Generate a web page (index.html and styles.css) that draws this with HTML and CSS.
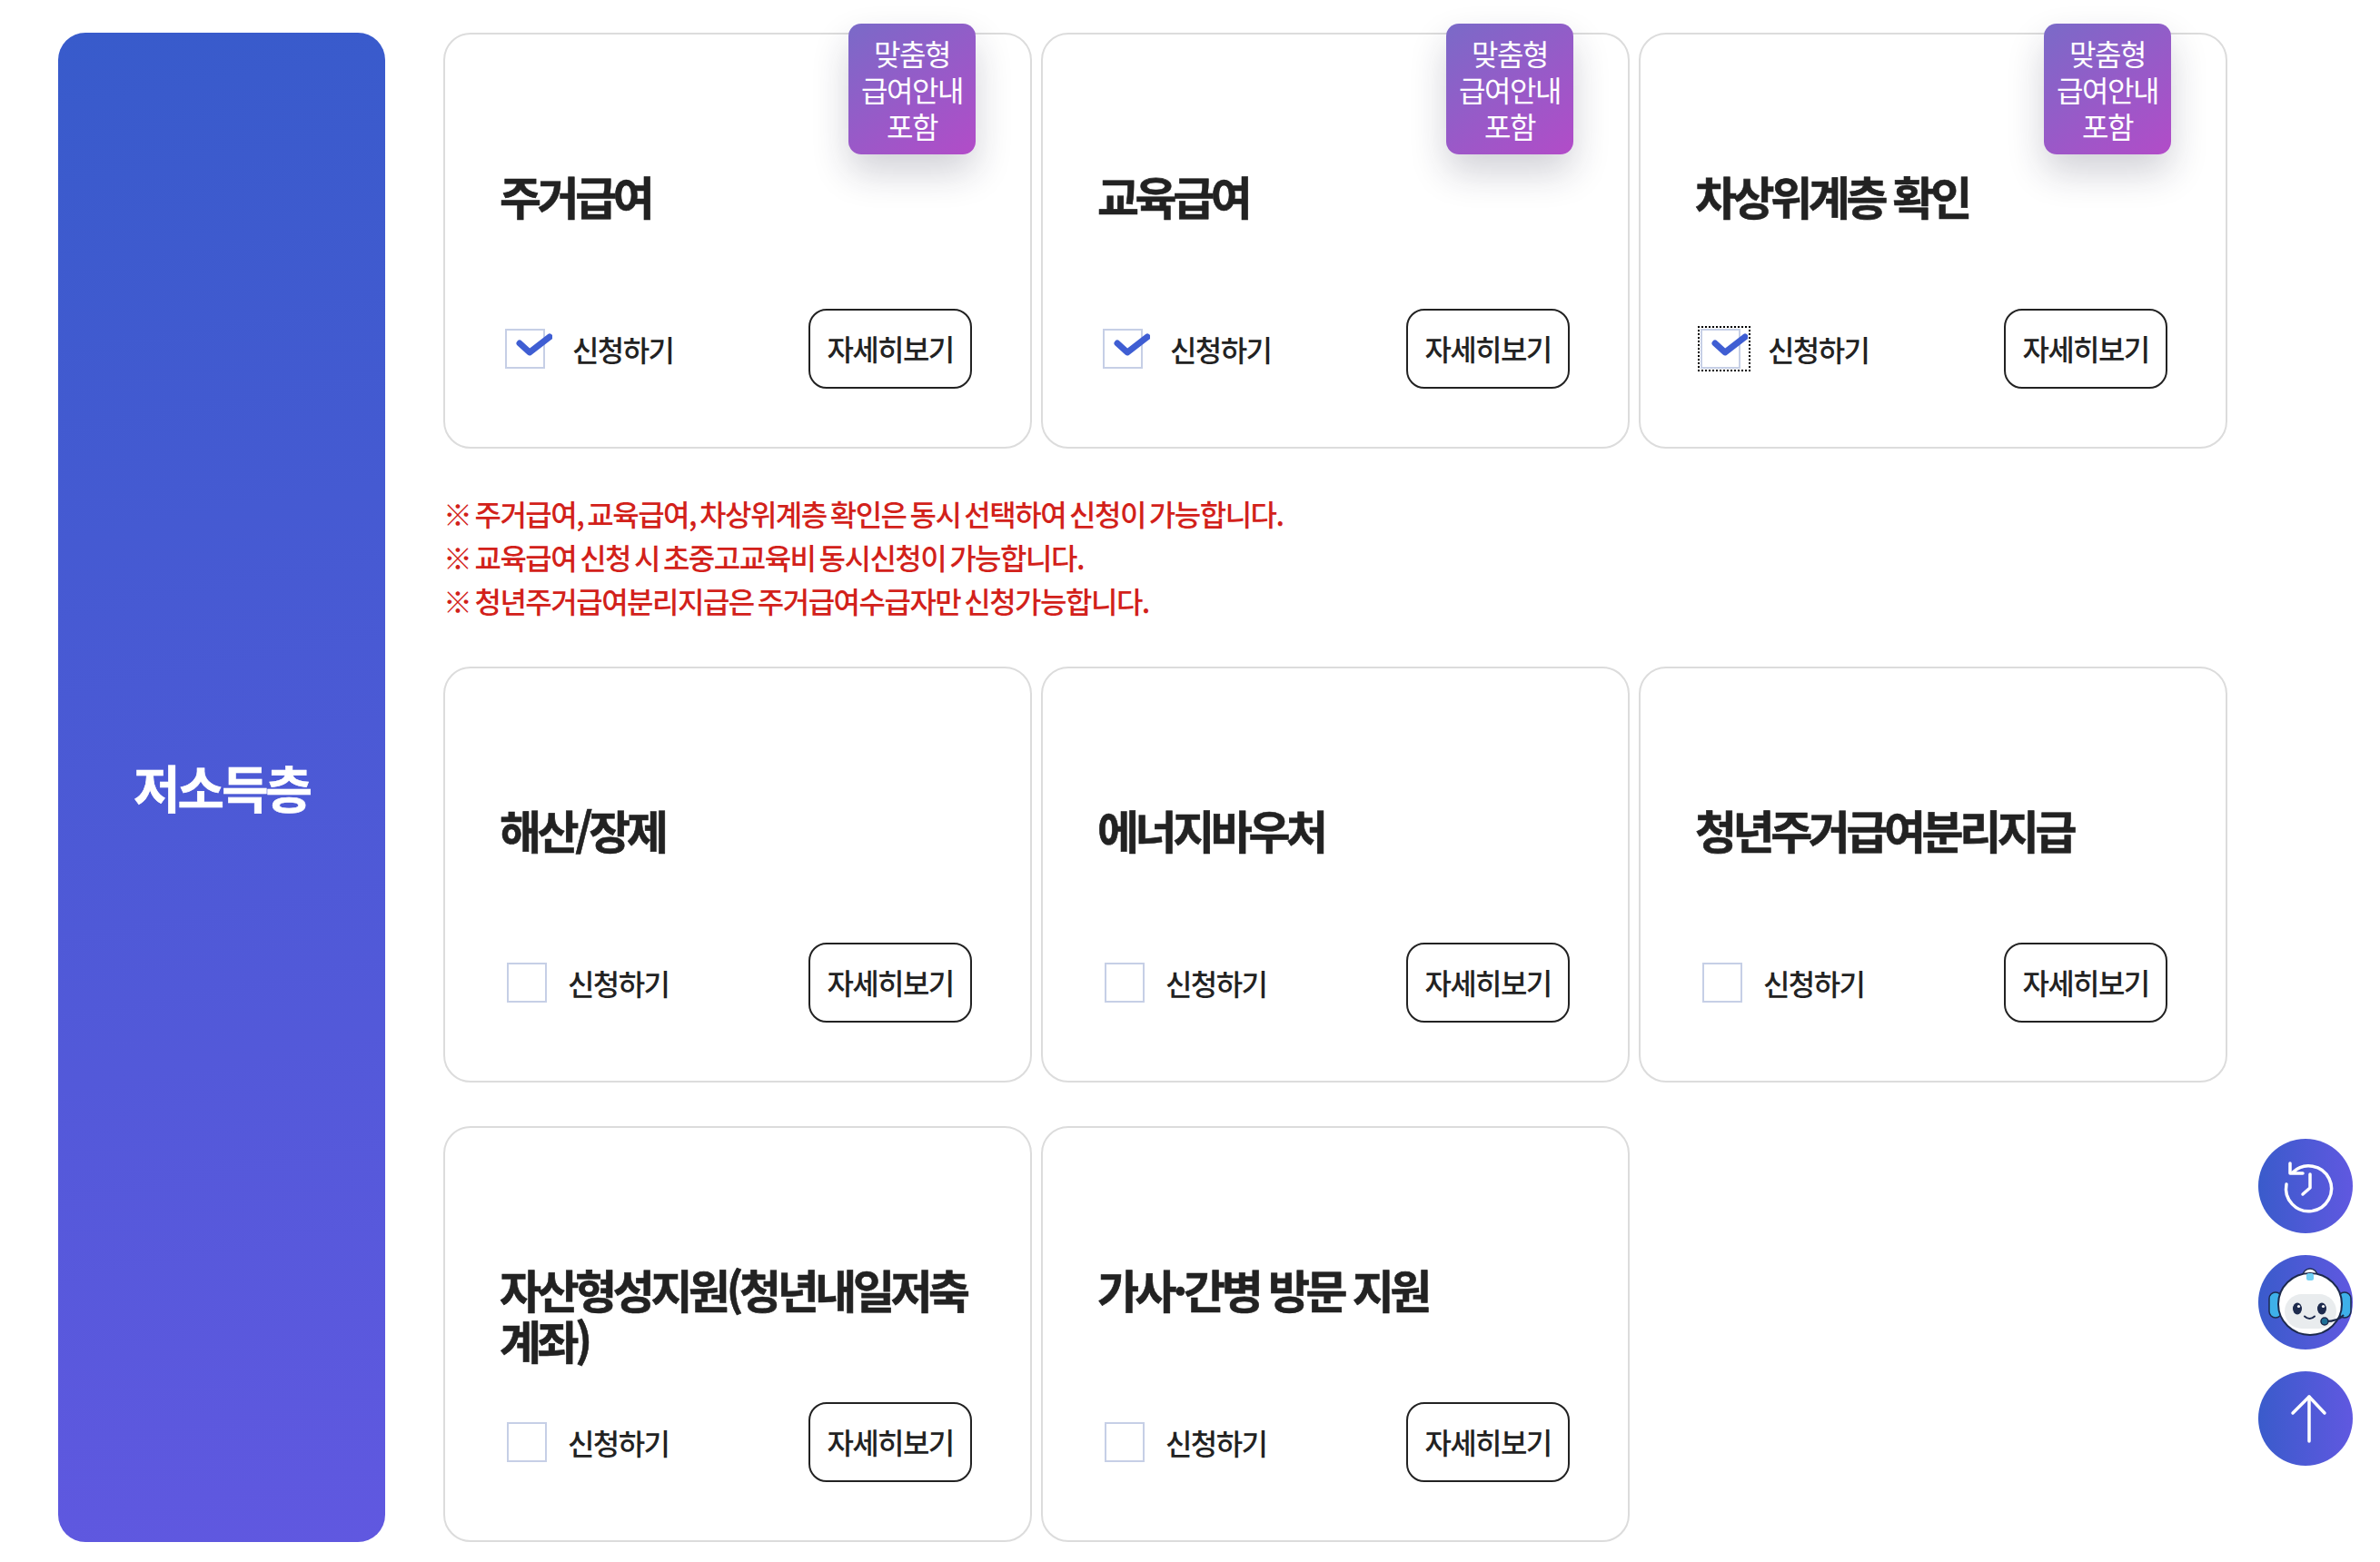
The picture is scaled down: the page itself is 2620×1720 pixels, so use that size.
FILE: index.html
```html
<!DOCTYPE html>
<html lang="ko">
<head>
    <meta charset="UTF-8">
    <meta name="viewport" content="width=device-width, initial-scale=1.0">
    <link rel="stylesheet" href="styles.css">
    <title>저소득층</title>
</head>
<body>
    <div class="wrap">
        <div class="side">저소득층</div>
        <div class="content">
            <div class="cards">
                <div class="card">
                    <span class="badge">맞춤형 급여안내 포함</span>
                    <strong class="cardTitle">주거급여</strong>
                    <div class="cardBottom">
                        <label class="apply">
                            <svg class="checked" viewBox="0 0 52 44"><rect x="1" y="1" width="42" height="42" fill="#fff" stroke="#c6cfe6" stroke-width="2"/><path d="M16 16l11 10L49 9" fill="none" stroke="#3f5ed3" stroke-width="7" stroke-linecap="round" stroke-linejoin="round"/></svg>
                            신청하기
                        </label>
                        <button class="moreBtn">자세히보기</button>
                    </div>
                </div>
                <div class="card">
                    <span class="badge">맞춤형 급여안내 포함</span>
                    <strong class="cardTitle">교육급여</strong>
                    <div class="cardBottom">
                        <label class="apply">
                            <svg class="checked" viewBox="0 0 52 44"><rect x="1" y="1" width="42" height="42" fill="#fff" stroke="#c6cfe6" stroke-width="2"/><path d="M16 16l11 10L49 9" fill="none" stroke="#3f5ed3" stroke-width="7" stroke-linecap="round" stroke-linejoin="round"/></svg>
                            신청하기
                        </label>
                        <button class="moreBtn">자세히보기</button>
                    </div>
                </div>
                <div class="card">
                    <span class="badge">맞춤형 급여안내 포함</span>
                    <strong class="cardTitle">차상위계층 확인</strong>
                    <div class="cardBottom">
                        <label class="apply">
                            <svg class="checked focused" viewBox="0 0 52 44"><rect x="1" y="1" width="42" height="42" fill="#fff" stroke="#c6cfe6" stroke-width="2"/><path d="M16 16l11 10L49 9" fill="none" stroke="#3f5ed3" stroke-width="7" stroke-linecap="round" stroke-linejoin="round"/></svg>
                            신청하기
                        </label>
                        <button class="moreBtn">자세히보기</button>
                    </div>
                </div>
            </div>

            <div class="notes">
                <p>※ 주거급여, 교육급여, 차상위계층 확인은 동시 선택하여 신청이 가능합니다.</p>
                <p>※ 교육급여 신청 시 초중고교육비 동시신청이 가능합니다.</p>
                <p>※ 청년주거급여분리지급은 주거급여수급자만 신청가능합니다.</p>
            </div>

            <div class="cards">
                <div class="card">
                    <strong class="cardTitle">해산/장제</strong>
                    <div class="cardBottom">
                        <label class="apply"><span class="box"></span>신청하기</label>
                        <button class="moreBtn">자세히보기</button>
                    </div>
                </div>
                <div class="card">
                    <strong class="cardTitle">에너지바우처</strong>
                    <div class="cardBottom">
                        <label class="apply"><span class="box"></span>신청하기</label>
                        <button class="moreBtn">자세히보기</button>
                    </div>
                </div>
                <div class="card">
                    <strong class="cardTitle">청년주거급여분리지급</strong>
                    <div class="cardBottom">
                        <label class="apply"><span class="box"></span>신청하기</label>
                        <button class="moreBtn">자세히보기</button>
                    </div>
                </div>
                <div class="card">
                    <strong class="cardTitle">자산형성지원(청년내일저축계좌)</strong>
                    <div class="cardBottom">
                        <label class="apply"><span class="box"></span>신청하기</label>
                        <button class="moreBtn">자세히보기</button>
                    </div>
                </div>
                <div class="card">
                    <strong class="cardTitle">가사·간병 방문 지원</strong>
                    <div class="cardBottom">
                        <label class="apply"><span class="box"></span>신청하기</label>
                        <button class="moreBtn">자세히보기</button>
                    </div>
                </div>
            </div>
        </div>
    </div>

    <div class="floatBtns">
        <button class="floatBtn" aria-label="최근 기록">
            <svg viewBox="0 0 104 104" fill="none" stroke="#fff" stroke-width="3.5" stroke-linecap="round" stroke-linejoin="round">
                <path d="M38 37A25 25 0 1 1 31 50"/>
                <path d="M35 27V38H49"/>
                <path d="M57 39V54L49 61"/>
            </svg>
        </button>
        <button class="floatBtn" aria-label="상담">
            <svg viewBox="0 0 104 104">
                <rect x="12" y="41" width="14" height="28" rx="7" fill="#3eb0ea" stroke="#1d2a4d" stroke-width="1.5"/>
                <rect x="88" y="41" width="14" height="28" rx="7" fill="#3eb0ea" stroke="#1d2a4d" stroke-width="1.5"/>
                <circle cx="57" cy="23" r="8" fill="#fff" stroke="#1d2a4d" stroke-width="1.5"/>
                <ellipse cx="57" cy="54" rx="35" ry="34" fill="#fff" stroke="#1d2a4d" stroke-width="2"/>
                <rect x="53" y="20" width="8" height="8" rx="2.5" fill="#6fd0f5"/>
                <rect x="29" y="43" width="57" height="38" rx="19" fill="#e9ecee"/>
                <ellipse cx="43" cy="59" rx="5" ry="6.5" fill="#1d2a4d"/>
                <ellipse cx="70" cy="59" rx="5" ry="6.5" fill="#1d2a4d"/>
                <circle cx="44.5" cy="56.500" r="1.6" fill="#fff"/>
                <circle cx="71.5" cy="56.500" r="1.6" fill="#fff"/>
                <path d="M51 67.5q5.500 5 11 0" fill="none" stroke="#1d2a4d" stroke-width="2" stroke-linecap="round"/>
                <path d="M74 73q14 0 20-7" fill="none" stroke="#1d2a4d" stroke-width="2"/>
                <circle cx="73" cy="73" r="4" fill="#1d6f96" stroke="#1d2a4d" stroke-width="1.5"/>
            </svg>
        </button>
        <button class="floatBtn" aria-label="맨 위로">
            <svg viewBox="0 0 104 104" fill="none" stroke="#fff" stroke-width="3.5" stroke-linecap="round" stroke-linejoin="round">
                <path d="M56 77V28"/>
                <path d="M38 46L56 28L73 46"/>
            </svg>
        </button>
    </div>
</body>
</html>
```

FILE: styles.css
```css
html, body{
    margin: 0;
    padding: 0;
    background-color: #fff;
}

body{
    font-family: "Noto Sans CJK KR", "Noto Sans", sans-serif;
    color: #222;
}

.wrap{
    display: flex;
    gap: 64px;
    padding: 36px 0 22px 64px;
}

.side{
    width: 360px;
    flex-shrink: 0;
    box-sizing: border-box;
    padding-bottom: 3px;
    display: flex;
    align-items: center;
    justify-content: center;
    border-radius: 30px;
    background: linear-gradient(170deg, #385bcb 0%, #6058e0 100%);
    color: #fff;
    font-size: 56px;
    font-weight: 700;
    letter-spacing: -3px;
    -webkit-text-stroke: 0.6px #fff;
}

.content{
    width: 1964px;
}

.cards{
    display: grid;
    grid-template-columns: repeat(3, 648px);
    column-gap: 10px;
    row-gap: 48px;
}

.card{
    position: relative;
    box-sizing: border-box;
    height: 458px;
    padding: 149px 64px 64px 60px;
    display: flex;
    flex-direction: column;
    justify-content: space-between;
    border: 2px solid #dcdcdc;
    border-radius: 30px;
    background-color: #fff;
}

.cardTitle{
    font-size: 50px;
    line-height: 56px;
    font-weight: 700;
    letter-spacing: -4.4px;
    -webkit-text-stroke: 0.6px #222;
    color: #222;
}

.badge{
    position: absolute;
    top: -12px;
    right: 60px;
    box-sizing: border-box;
    width: 140px;
    height: 144px;
    padding: 12px 8px 0;
    border-radius: 14px;
    background: linear-gradient(145deg, #7a6ac8 0%, #b24cc8 100%);
    box-shadow: 0 20px 40px rgba(30, 30, 60, 0.2);
    color: #fff;
    font-size: 32px;
    line-height: 40px;
    letter-spacing: -1.5px;
    text-align: center;
    word-break: keep-all;
}

.cardBottom{
    display: flex;
    align-items: center;
    justify-content: space-between;
}

.apply{
    display: flex;
    align-items: center;
    margin-left: 6px;
    gap: 23px;
    font-size: 32px;
    font-weight: 500;
    line-height: 44px;
    letter-spacing: -1.6px;
}

.box{
    box-sizing: border-box;
    width: 44px;
    height: 44px;
    margin-left: 2px;
    border: 2px solid #c6cfe6;
}

.checked{
    width: 52px;
    height: 44px;
    margin-right: -1px;
}

.focused{
    outline: 2px dotted #000;
    outline-offset: 1px;
}

.moreBtn{
    box-sizing: border-box;
    width: 180px;
    height: 88px;
    padding: 0 0 2px;
    border: 2px solid #222;
    border-radius: 20px;
    background-color: #fff;
    color: #222;
    font-family: inherit;
    font-size: 32px;
    font-weight: 500;
    letter-spacing: -1.6px;
}

.notes{
    margin: 47px 0 49px;
    color: #d2211a;
    font-size: 32px;
    font-weight: 500;
    line-height: 48px;
    letter-spacing: -1.5px;
    word-spacing: -3.5px;
}

.notes p{
    margin: 0;
}

.floatBtns{
    position: fixed;
    right: 30px;
    bottom: 106px;
    display: flex;
    flex-direction: column;
    gap: 24px;
}

.floatBtn{
    width: 104px;
    height: 104px;
    padding: 0;
    border: none;
    border-radius: 50%;
    background: linear-gradient(90deg, #3a5bcb 0%, #6058e0 100%);
}

.floatBtn svg{
    display: block;
    width: 104px;
    height: 104px;
}
```
